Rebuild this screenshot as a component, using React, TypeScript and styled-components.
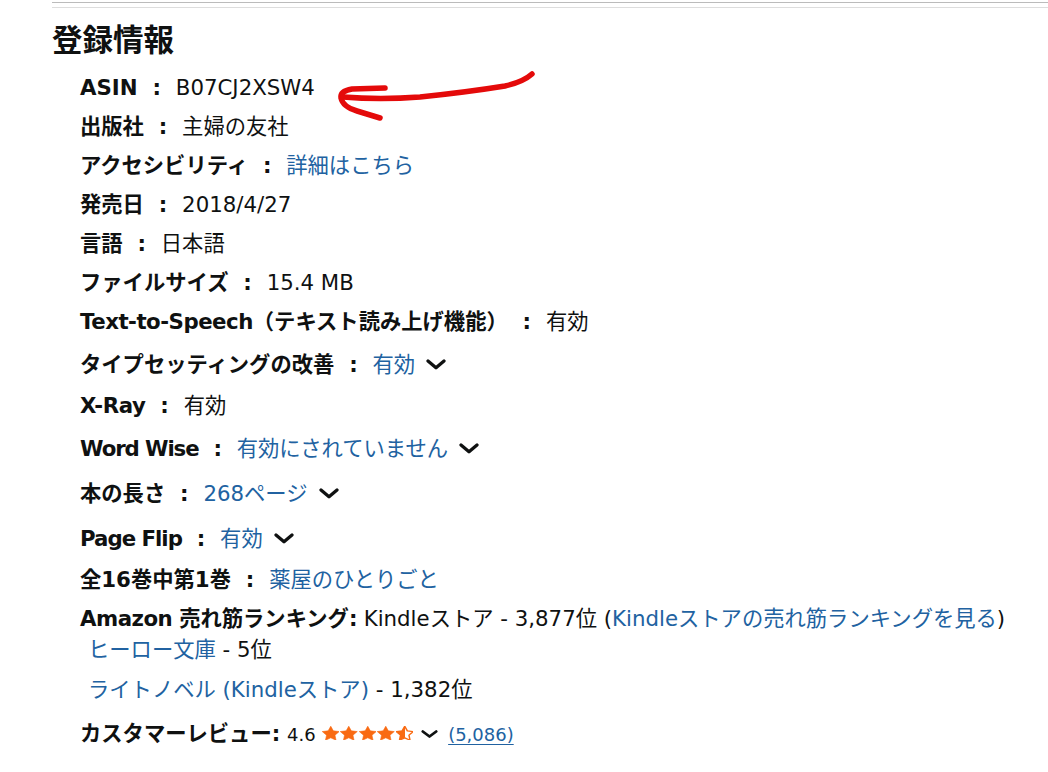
import React from "react";
import styled, { createGlobalStyle } from "styled-components";

const GlobalStyle = createGlobalStyle`
  html, body { margin: 0; padding: 0; background: #ffffff; }
  body {
    font-family: "DejaVu Sans", "Noto Sans CJK JP", sans-serif;
    color: #0f1111;
  }
`;

const Page = styled.div`
  position: relative;
  padding-left: 52px;
  min-height: 772px;
  box-sizing: border-box;
  overflow: hidden;
`;

const Rule = styled.div<{ $color: string; $gap: number }>`
  height: 0;
  border-top: 1px solid ${(p) => p.$color};
  margin-top: ${(p) => p.$gap}px;
`;

const Heading = styled.h2`
  margin: 12px 0 0;
  font-size: 30.5px;
  line-height: 36px;
  font-weight: 700;
  font-family: "Noto Sans CJK JP", sans-serif;
  color: #0f1111;
`;

const List = styled.ul`
  list-style: none;
  margin: 17px 0 0;
  padding: 0 0 0 28px;
`;

const Item = styled.li<{ $tall?: boolean }>`
  font-size: 21.3px;
  line-height: 30px;
  padding-top: ${(p) => (p.$tall ? 4 : 0)}px;
  margin-bottom: ${(p) => (p.$tall ? 11 : 9)}px;
  white-space: nowrap;
`;

const RankItem = styled.li`
  font-size: 21.3px;
  line-height: 30px;
  white-space: nowrap;
`;

const SubList = styled.ul`
  list-style: none;
  margin: 1px 0 0;
  padding: 0 0 0 8px;
`;

const SubItem = styled.li`
  font-size: 21.3px;
  line-height: 30px;
  margin-bottom: 10px;
  white-space: nowrap;
`;

const Label = styled.span`
  font-weight: 700;
`;

const LatinRun = styled.span<{ $tighten: number }>`
  letter-spacing: ${(p) => -p.$tighten}px;
`;

const Link = styled.a<{ $underline?: boolean }>`
  color: #2162a1;
  text-decoration: ${(p) => (p.$underline ? "underline" : "none")};
  text-underline-offset: 3px;
  cursor: pointer;
`;

const Small = styled.span`
  font-size: 18px;
`;

const ChevronSvg = styled.svg<{ $left: number; $right: number }>`
  display: inline-block;
  vertical-align: middle;
  margin-left: ${(p) => p.$left}px;
  margin-right: ${(p) => p.$right}px;
  margin-top: -3px;
`;

const StarRow = styled.span`
  display: inline-flex;
  align-items: center;
  gap: 1px;
  vertical-align: middle;
  margin-top: -4px;
  margin-left: 6px;
`;

const StarSvg = styled.svg`
  display: block;
`;

const Overlay = styled.svg`
  position: absolute;
  left: 0;
  top: 0;
  pointer-events: none;
`;

const Chevron: React.FC<{ small?: boolean }> = ({ small }) =>
  small ? (
    <ChevronSvg $left={8} $right={10} width="17" height="8" viewBox="0 0 17 8">
      <polyline
        points="1.8,1.5 8.5,6.5 15.2,1.5"
        fill="none"
        stroke="#0f1111"
        strokeWidth="2.8"
        strokeLinecap="round"
        strokeLinejoin="round"
      />
    </ChevronSvg>
  ) : (
    <ChevronSvg $left={11} $right={0} width="20" height="11" viewBox="0 0 20 11">
      <polyline
        points="2,2 10,8.8 18,2"
        fill="none"
        stroke="#0f1111"
        strokeWidth="3.3"
        strokeLinecap="round"
        strokeLinejoin="round"
      />
    </ChevronSvg>
  );

const STAR_PATH =
  "M12 1.5l3.2 6.6 7.3 1-5.3 5.1 1.3 7.2L12 18l-6.5 3.4 1.3-7.2-5.3-5.1 7.3-1z";

const STAR = "#f96a12";

const Star: React.FC<{ half?: boolean }> = ({ half }) => (
  <StarSvg width="17.5" height="14.5" viewBox="1.2 1.2 21.6 20.6" preserveAspectRatio="none">
    {half ? (
      <>
        <defs>
          <linearGradient id="halfStar" x1="0" x2="1" y1="0" y2="0">
            <stop offset="50%" stopColor={STAR} />
            <stop offset="50%" stopColor="#ffffff" />
          </linearGradient>
        </defs>
        <path d={STAR_PATH} fill="url(#halfStar)" stroke={STAR} strokeWidth="1.8" strokeLinejoin="round" />
      </>
    ) : (
      <path d={STAR_PATH} fill={STAR} stroke={STAR} strokeWidth="0.8" strokeLinejoin="round" />
    )}
  </StarSvg>
);

/* Split a label into runs of Latin and CJK text so Latin runs can be tightened. */
const LabelText: React.FC<{ text: string; tighten: number }> = ({ text, tighten }) => {
  if (!tighten) return <>{text}</>;
  const parts = text.match(/[\x20-\x7e]+|[^\x20-\x7e]+/g) || [];
  return (
    <>
      {parts.map((part, i) =>
        /^[\x20-\x7e]+$/.test(part) ? (
          <LatinRun key={i} $tighten={tighten}>
            {part}
          </LatinRun>
        ) : (
          <React.Fragment key={i}>{part}</React.Fragment>
        )
      )}
    </>
  );
};

const Sep = "\u00a0\u00a0:\u00a0\u00a0";

type Row = {
  label: string;
  value: string;
  link?: boolean;
  chevron?: boolean;
  tighten?: number;
};

const rows: Row[] = [
  { label: "ASIN", value: "B07CJ2XSW4" },
  { label: "出版社", value: "主婦の友社" },
  { label: "アクセシビリティ", value: "詳細はこちら", link: true },
  { label: "発売日", value: "2018/4/27" },
  { label: "言語", value: "日本語" },
  { label: "ファイルサイズ", value: "15.4 MB" },
  { label: "Text-to-Speech（テキスト読み上げ機能）", value: "有効", tighten: 0.5 },
  { label: "タイプセッティングの改善", value: "有効", link: true, chevron: true },
  { label: "X-Ray", value: "有効", tighten: 0.4 },
  { label: "Word Wise", value: "有効にされていません", link: true, chevron: true, tighten: 1.1 },
  { label: "本の長さ", value: "268ページ", link: true, chevron: true },
  { label: "Page Flip", value: "有効", link: true, chevron: true, tighten: 1.0 },
  { label: "全16巻中第1巻", value: "薬屋のひとりごと", link: true },
];

export default function App() {
  return (
    <Page>
      <GlobalStyle />
      <Rule $color="#bbbbbb" $gap={2} />
      <Rule $color="#dddddd" $gap={4} />
      <Heading>登録情報</Heading>
      <List>
        {rows.map((r) => (
          <Item key={r.label} $tall={r.chevron}>
            <Label>
              <LabelText text={r.label} tighten={r.tighten || 0} />
              {Sep}
            </Label>
            {r.link ? <Link>{r.value}</Link> : <span>{r.value}</span>}
            {r.chevron && <Chevron />}
          </Item>
        ))}
        <RankItem>
          <Label>
            <LabelText text="Amazon 売れ筋ランキング:" tighten={0.5} />
          </Label>{" "}
          Kindleストア - 3,877位 (<Link>Kindleストアの売れ筋ランキングを見る</Link>)
          <SubList>
            <SubItem>
              <Link>ヒーロー文庫</Link> - 5位
            </SubItem>
            <SubItem>
              <Link>ライトノベル (Kindleストア)</Link> - 1,382位
            </SubItem>
          </SubList>
        </RankItem>
        <Item $tall>
          <Label>カスタマーレビュー:</Label> <Small>4.6</Small>
          <StarRow>
            <Star />
            <Star />
            <Star />
            <Star />
            <Star half />
          </StarRow>
          <Chevron small />
          <Small>
            <Link $underline>(5,086)</Link>
          </Small>
        </Item>
      </List>
      <Overlay width="1048" height="772" viewBox="0 0 1048 772">
        <g fill="none" stroke="#e40a0a" strokeWidth="5.5" strokeLinecap="round" strokeLinejoin="round">
          <path d="M385 88 L352 89 Q340 91 341 98 Q343 107 357 111 Q370 115 380 118" />
          <path d="M343 97 Q380 100 420 97 Q468 92 505 86 Q523 82 532 74" />
        </g>
      </Overlay>
    </Page>
  );
}
